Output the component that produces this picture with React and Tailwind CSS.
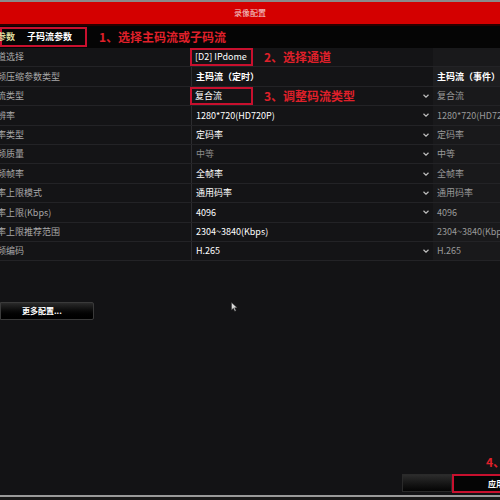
const font = { fontFamily: '"Noto Sans CJK SC", "Noto Sans", sans-serif' };

const rows = [
    { label: '道选择', value: '[D2] IPdome', boxed: true, note: '2、选择通道', right: '', arrow: false },
    { label: '频压缩参数类型', value: '主码流（定时）', bold: true, right: '主码流（事件）', header: true, arrow: false },
    { label: '流类型', value: '复合流', boxed: true, note: '3、调整码流类型', right: '复合流', arrow: true },
    { label: '辨率', value: '1280*720(HD720P)', right: '1280*720(HD720P)', arrow: true },
    { label: '率类型', value: '定码率', right: '定码率', arrow: true },
    { label: '频质量', value: '中等', dim: true, right: '中等', arrow: true },
    { label: '频帧率', value: '全帧率', right: '全帧率', arrow: true },
    { label: '率上限模式', value: '通用码率', right: '通用码率', arrow: true },
    { label: '率上限(Kbps)', value: '4096', right: '4096', arrow: true },
    { label: '率上限推荐范围', value: '2304~3840(Kbps)', right: '2304~3840(Kbps)', arrow: false },
    { label: '频编码', value: 'H.265', right: 'H.265', arrow: true },
];

function Chevron() {
    return (
        <svg width="6" height="4" viewBox="0 0 6 4" className="shrink-0">
            <path d="M0.5 0.8 L3 3.2 L5.5 0.8" fill="none" stroke="#bdbdbd" strokeWidth="1.2" />
        </svg>
    );
}

export default function App() {
    return (
        <div className="relative h-[500px] w-[500px] overflow-hidden bg-[#131315] text-[9px]" style={font}>
            <div className="h-[2px] bg-[#8a8a8a]" />
            <div className="flex h-[22px] items-center justify-center bg-[#d40000] text-[8px] text-[#f3d0d0]">
                录像配置
            </div>
            <div className="h-[2px] bg-[#2a0000]" />

            <div className="flex h-[22px] items-center bg-[#050505]">
                <div className="flex h-[20px] w-[87px] items-center border-2 border-[#c8102e]">
                    <span className="ml-[-5px] font-bold text-[#d8d89a]">参数</span>
                    <span className="ml-[12px] font-bold text-white">子码流参数</span>
                </div>
                <span className="ml-[12px] text-[12px] font-bold text-[#e0202a]">1、选择主码流或子码流</span>
            </div>

            <div className="flex flex-col">
                {rows.map((r) => (
                    <div key={r.label} className="flex h-[19.4px] border-b border-[#232326] bg-[#141416]">
                        <div className="flex w-[192px] items-center overflow-hidden border-r border-[#2c2c2f] text-[#a8a8a8]">
                            <span className="ml-[-3px] whitespace-nowrap">{r.label}</span>
                        </div>
                        <div className="flex w-[241px] items-center pr-[4px]">
                            {r.boxed ? (
                                <div className="ml-[-2px] flex h-[18px] w-[63px] items-center border-2 border-[#c8102e] pl-[3px] whitespace-nowrap text-white">
                                    {r.value}
                                </div>
                            ) : (
                                <span
                                    className={
                                        r.dim
                                            ? 'ml-[4px] whitespace-nowrap text-[#8c8c8c]'
                                            : r.bold
                                              ? 'ml-[4px] font-bold whitespace-nowrap text-white'
                                              : 'ml-[4px] whitespace-nowrap text-white'
                                    }
                                >
                                    {r.value}
                                </span>
                            )}
                            {r.note && (
                                <span className="ml-[11px] text-[12px] font-bold whitespace-nowrap text-[#e0202a]">{r.note}</span>
                            )}
                            <div className="flex-1" />
                            {r.arrow && <Chevron />}
                        </div>
                        <div
                            className={
                                r.header
                                    ? 'flex flex-1 items-center overflow-hidden bg-[#1e1e20] pl-[4px] font-bold whitespace-nowrap text-white'
                                    : 'flex flex-1 items-center overflow-hidden bg-[#19191b] pl-[4px] whitespace-nowrap text-[#9a9a9a]'
                            }
                        >
                            {r.right}
                        </div>
                    </div>
                ))}
            </div>

            <div className="mt-[41px] flex h-[18px] w-[94px] items-center rounded-r-[2px] border border-[#3a3a3a] bg-gradient-to-b from-[#2a2a2a] to-[#000000] pl-[21px] text-[8px] font-bold text-white">
                更多配置...
            </div>

            <svg className="absolute left-[231px] top-[302px]" width="7" height="10" viewBox="0 0 7 10">
                <path d="M0.5 0.5 L0.5 8 L2.4 6.2 L3.8 9.3 L5 8.8 L3.6 5.8 L6.2 5.8 Z" fill="#d8d8d8" stroke="#333" strokeWidth="0.5" />
            </svg>

            <span className="absolute left-[486px] top-[453px] text-[12px] font-bold text-[#e0202a]">4、</span>
            <div className="absolute left-[402px] top-[474px] h-[18px] w-[50px] border border-[#2a2a2a] bg-gradient-to-b from-[#2c2c2c] to-[#050505]" />
            <div className="absolute left-[452px] top-[474px] flex h-[19px] w-[60px] items-center border-2 border-[#c8102e] bg-[#050505] pl-[34px] text-[8px] font-bold whitespace-nowrap text-white">
                应用
            </div>

            <div className="absolute bottom-[3px] left-0 h-[2px] w-full bg-[#9a9a9a]" />
            <div className="absolute bottom-0 left-0 h-[3px] w-full bg-[#1a1a1a]" />
        </div>
    );
}
